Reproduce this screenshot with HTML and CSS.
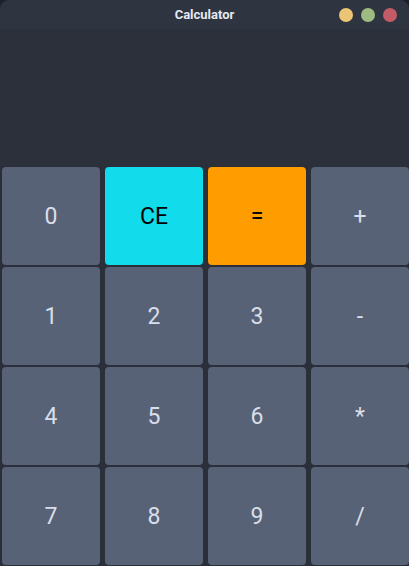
FILE: index.html
```html
<!DOCTYPE html>
<html>
<head>
<meta charset="utf-8">
<link rel="stylesheet" href="styles.css">
</head>
<body>
<div class="window">
  <div class="titlebar">
    <span class="title">Calculator</span>
    <div class="controls">
      <span class="dot dot-min"></span>
      <span class="dot dot-max"></span>
      <span class="dot dot-close"></span>
    </div>
  </div>
  <div class="display"></div>
  <div class="keys">
    <div class="key">0</div>
    <div class="key key-ce">CE</div>
    <div class="key key-eq">=</div>
    <div class="key">+</div>
    <div class="key">1</div>
    <div class="key">2</div>
    <div class="key">3</div>
    <div class="key">-</div>
    <div class="key">4</div>
    <div class="key">5</div>
    <div class="key">6</div>
    <div class="key">*</div>
    <div class="key">7</div>
    <div class="key">8</div>
    <div class="key">9</div>
    <div class="key">/</div>
  </div>
</div>
</body>
</html>
```
FILE: styles.css
```css
html, body {
  margin: 0;
  padding: 0;
  background: #1d2027;
  width: 409px;
  height: 566px;
  overflow: hidden;
}
.window {
  width: 409px;
  height: 566px;
  background: #2a2f3a;
  border-radius: 9px 9px 0 0;
  overflow: hidden;
  font-family: Roboto, "Liberation Sans", sans-serif;
}
.titlebar {
  height: 29px;
  background: #2e3440;
  position: relative;
  display: flex;
  align-items: center;
  justify-content: center;
}
.title {
  color: #e5e9f0;
  font-size: 13px;
  font-weight: bold;
}
.controls {
  position: absolute;
  right: 12px;
  top: 8px;
  display: flex;
  gap: 8px;
}
.dot {
  width: 14px;
  height: 14px;
  border-radius: 50%;
}
.dot-min { background: #ebc475; }
.dot-max { background: #9dbb83; }
.dot-close { background: #c35c66; }
.display {
  height: 136px;
  background: #2b303b;
}
.keys {
  display: grid;
  grid-template-columns: repeat(4, 98px);
  grid-auto-rows: 98px;
  column-gap: 5px;
  row-gap: 2px;
  padding: 2px 0 0 2px;
  background: #2a2f3a;
}
.key {
  background: #586276;
  border-radius: 4px;
  display: flex;
  align-items: center;
  justify-content: center;
  color: #d8dee9;
  font-size: 23px;
}
.key-ce {
  background: #12dbeb;
  color: #000;
}
.key-eq {
  background: #ff9c00;
  color: #000;
}
```
